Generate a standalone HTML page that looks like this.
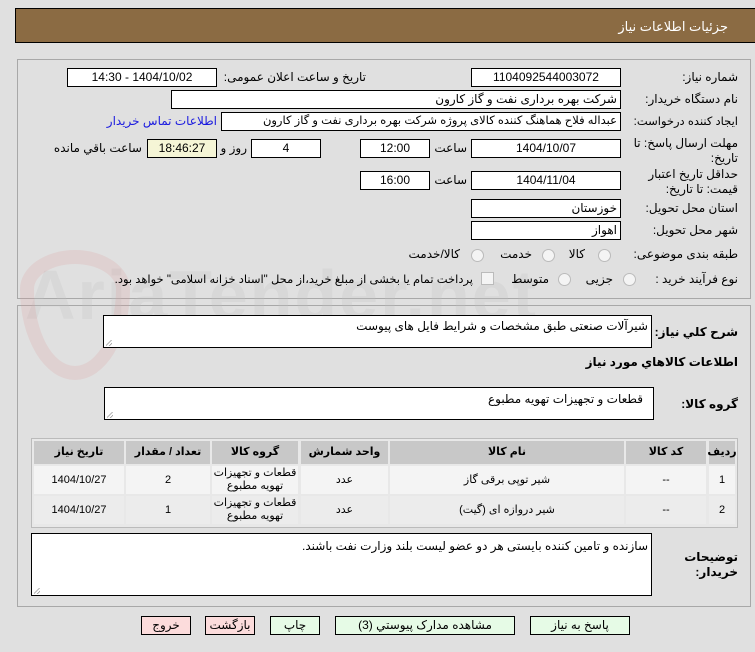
<!DOCTYPE html>
<html><head><meta charset="utf-8"><style>
body{margin:0;width:755px;height:652px;background:#e0e0e0;font-family:"Liberation Sans","DejaVu Sans",sans-serif;font-size:12px;color:#000;position:relative;overflow:hidden}
.a{position:absolute}
.box{position:absolute;background:#fff;border:1px solid #000;box-sizing:border-box;direction:rtl;text-align:center;font-size:12px;line-height:16px;white-space:nowrap;overflow:hidden}
.l{position:absolute;direction:rtl;text-align:right;font-size:12px;white-space:nowrap}
.r{text-align:right;padding-right:3px}
.panel{position:absolute;border:1px solid #a8a8a8;box-sizing:border-box}
.c{position:absolute;box-sizing:border-box;text-align:center;font-size:11px;direction:rtl;display:flex;align-items:center;justify-content:center;line-height:13px}
.h{background:#c8c8c8;font-weight:bold}
.d1{background:#f4f4f4}
.d2{background:#ececec}
.btn{position:absolute;height:19px;border:1px solid #000;box-sizing:border-box;text-align:center;font-size:12px;line-height:16px;background:#e6fbe6}
.rad{position:absolute;width:11px;height:11px;border-radius:50%;border:1px solid #bbb;background:#f4f4f4}
.grip{position:absolute;left:2px;bottom:1px;width:6px;height:6px;background:linear-gradient(135deg,transparent 40%,#888 45%,transparent 55%,transparent 70%,#888 75%,transparent 85%)}
</style></head><body>
<div class="a" style="left:15px;top:8px;width:745px;height:35px;background:#8b6b43;border:1px solid #000;box-sizing:border-box"></div>
<div class="l" style="right:27px;top:19px;color:#fff;font-size:13px">جزئیات اطلاعات نیاز</div>

<div class="panel" style="left:17px;top:59px;width:734px;height:240px"></div>
<div class="panel" style="left:17px;top:305px;width:734px;height:302px"></div>

<div class="a" style="left:25px;top:255px;font-size:70px;font-weight:bold;color:rgba(190,190,190,0.25);letter-spacing:2px">AriaTender.net</div>
<div class="a" style="left:20px;top:250px;width:110px;height:130px;border:14px solid rgba(220,150,150,0.2);border-radius:50% 50% 50% 50%/30% 30% 70% 70%;box-sizing:border-box"></div>

<div class="l" style="right:17px;top:70px">شماره نیاز:</div>
<div class="box" style="left:471px;top:68px;width:150px;height:19px">1104092544003072</div>
<div class="l" style="right:389px;top:70px">تاریخ و ساعت اعلان عمومی:</div>
<div class="box" style="left:67px;top:68px;width:150px;height:19px">1404/10/02 - 14:30</div>

<div class="l" style="right:17px;top:92px">نام دستگاه خریدار:</div>
<div class="box r" style="left:171px;top:90px;width:450px;height:19px">شرکت بهره برداری نفت و گاز کارون</div>

<div class="l" style="right:17px;top:114px;font-size:11.5px">ایجاد کننده درخواست:</div>
<div class="box r" style="left:221px;top:112px;width:400px;height:19px;font-size:11.5px">عبداله فلاح هماهنگ کننده کالای پروژه شرکت بهره برداری نفت و گاز کارون</div>
<div class="l" style="right:538px;top:114px;color:#1a1adf">اطلاعات تماس خریدار</div>

<div class="l" style="right:17px;top:136px;line-height:15px">مهلت ارسال پاسخ: تا<br>تاریخ:</div>
<div class="box" style="left:471px;top:139px;width:150px;height:19px">1404/10/07</div>
<div class="l" style="right:288px;top:141px">ساعت</div>
<div class="box" style="left:360px;top:139px;width:70px;height:19px">12:00</div>
<div class="box" style="left:251px;top:139px;width:70px;height:19px">4</div>
<div class="l" style="right:508px;top:141px">روز و</div>
<div class="box" style="left:147px;top:139px;width:70px;height:19px;background:#f5f5d6">18:46:27</div>
<div class="l" style="right:613px;top:141px">ساعت باقي مانده</div>

<div class="l" style="right:17px;top:167px;line-height:15px">حداقل تاریخ اعتبار<br>قیمت: تا تاریخ:</div>
<div class="box" style="left:471px;top:171px;width:150px;height:19px">1404/11/04</div>
<div class="l" style="right:288px;top:173px">ساعت</div>
<div class="box" style="left:360px;top:171px;width:70px;height:19px">16:00</div>

<div class="l" style="right:17px;top:201px">استان محل تحویل:</div>
<div class="box r" style="left:471px;top:199px;width:150px;height:19px">خوزستان</div>
<div class="l" style="right:17px;top:223px">شهر محل تحویل:</div>
<div class="box r" style="left:471px;top:221px;width:150px;height:19px">اهواز</div>

<div class="l" style="right:17px;top:247px">طبقه بندی موضوعی:</div>
<div class="rad" style="left:598px;top:249px"></div><div class="l" style="right:170px;top:247px">کالا</div>
<div class="rad" style="left:542px;top:249px"></div><div class="l" style="right:223px;top:247px">خدمت</div>
<div class="rad" style="left:471px;top:249px"></div><div class="l" style="right:295px;top:247px">کالا/خدمت</div>

<div class="l" style="right:17px;top:272px">نوع فرآیند خرید :</div>
<div class="rad" style="left:623px;top:273px"></div><div class="l" style="right:142px;top:272px">جزیی</div>
<div class="rad" style="left:558px;top:273px"></div><div class="l" style="right:206px;top:272px">متوسط</div>
<div class="a" style="left:481px;top:272px;width:11px;height:11px;border:1px solid #bbb;background:#f4f4f4"></div>
<div class="l" style="right:282px;top:272px;font-size:11.5px">پرداخت تمام یا بخشی از مبلغ خرید،از محل "اسناد خزانه اسلامی" خواهد بود.</div>

<div class="l" style="right:17px;top:325px;font-weight:bold">شرح كلي نياز:</div>
<div class="box r" style="left:103px;top:315px;width:549px;height:33px;text-align:right;padding-top:2px">شیرآلات صنعتی طبق مشخصات و شرایط فایل های پیوست<div class="grip"></div></div>

<div class="l" style="right:17px;top:355px;font-weight:bold">اطلاعات كالاهاي مورد نياز</div>

<div class="l" style="right:17px;top:397px;font-weight:bold">گروه كالا:</div>
<div class="box" style="left:104px;top:387px;width:550px;height:33px;text-align:right;padding:3px 10px 0 0">قطعات و تجهیزات تهویه مطبوع<div class="grip"></div></div>

<div class="a" style="left:31px;top:438px;width:707px;height:90px;border:1px solid #bbb;box-sizing:border-box;background:#e8e8e8"></div>
<!-- header -->
<div class="c h" style="left:709px;top:441px;width:26px;height:23px">ردیف</div>
<div class="c h" style="left:626px;top:441px;width:80px;height:23px">کد کالا</div>
<div class="c h" style="left:390px;top:441px;width:234px;height:23px">نام کالا</div>
<div class="c h" style="left:301px;top:441px;width:87px;height:23px">واحد شمارش</div>
<div class="c h" style="left:212px;top:441px;width:86px;height:23px">گروه کالا</div>
<div class="c h" style="left:126px;top:441px;width:84px;height:23px">تعداد / مقدار</div>
<div class="c h" style="left:34px;top:441px;width:90px;height:23px">تاریخ نیاز</div>
<!-- row1 -->
<div class="c d1" style="left:709px;top:466px;width:26px;height:28px">1</div>
<div class="c d1" style="left:626px;top:466px;width:80px;height:28px">--</div>
<div class="c d1" style="left:390px;top:466px;width:234px;height:28px">شیر توپی برقی گاز</div>
<div class="c d1" style="left:301px;top:466px;width:87px;height:28px">عدد</div>
<div class="c d1" style="left:212px;top:466px;width:86px;height:28px">قطعات و تجهیزات<br>تهویه مطبوع</div>
<div class="c d1" style="left:126px;top:466px;width:84px;height:28px">2</div>
<div class="c d1" style="left:34px;top:466px;width:90px;height:28px">1404/10/27</div>
<!-- row2 -->
<div class="c d2" style="left:709px;top:496px;width:26px;height:28px">2</div>
<div class="c d2" style="left:626px;top:496px;width:80px;height:28px">--</div>
<div class="c d2" style="left:390px;top:496px;width:234px;height:28px">شیر دروازه ای (گیت)</div>
<div class="c d2" style="left:301px;top:496px;width:87px;height:28px">عدد</div>
<div class="c d2" style="left:212px;top:496px;width:86px;height:28px">قطعات و تجهیزات<br>تهویه مطبوع</div>
<div class="c d2" style="left:126px;top:496px;width:84px;height:28px">1</div>
<div class="c d2" style="left:34px;top:496px;width:90px;height:28px">1404/10/27</div>

<div class="l" style="right:17px;top:550px;font-weight:bold;line-height:15px">توضیحات<br>خریدار:</div>
<div class="box" style="left:31px;top:533px;width:621px;height:63px;text-align:right;padding:4px 3px 0 0">سازنده و تامین کننده بایستی هر دو عضو لیست بلند وزارت نفت باشند.<div class="grip"></div></div>

<div class="btn" style="left:530px;top:616px;width:100px">پاسخ به نیاز</div>
<div class="btn" style="left:335px;top:616px;width:180px">مشاهده مدارک پیوستي (3)</div>
<div class="btn" style="left:270px;top:616px;width:50px">چاپ</div>
<div class="btn" style="left:205px;top:616px;width:50px;background:#fcdcdc">بازگشت</div>
<div class="btn" style="left:141px;top:616px;width:50px;background:#fcdcdc">خروج</div>
</body></html>
